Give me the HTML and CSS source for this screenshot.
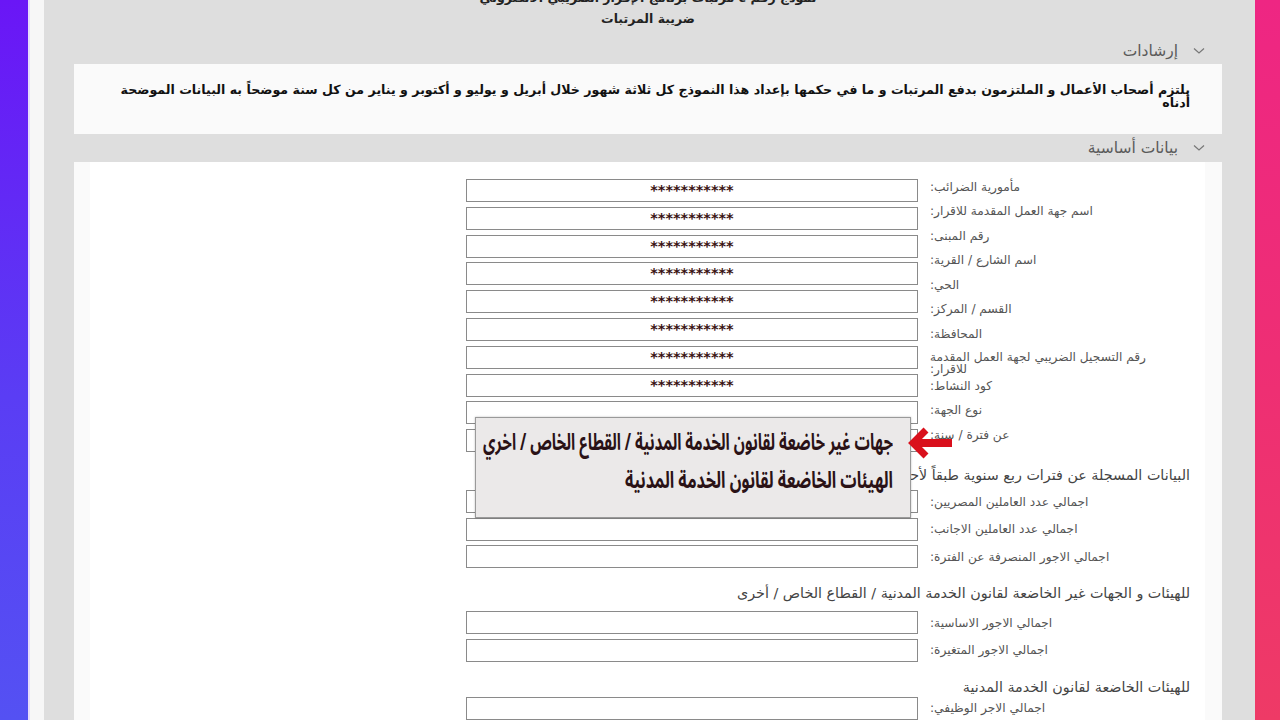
FILE: index.html
```html
<!DOCTYPE html>
<html lang="ar" dir="ltr">
<head>
<meta charset="utf-8">
<title>ضريبة المرتبات</title>
<link rel="stylesheet" href="styles.css">
</head>
<body>
<div class="bar-left"></div>
<div class="gutter"></div>
<main class="main" dir="rtl">
  <div class="title-block">
    <div class="title-line">نموذج رقم ٤ مرتبات برنامج الإقرار الضريبي الالكتروني</div>
    <div class="title-line">ضريبة المرتبات</div>
  </div>

  <div class="acc-head acc-head-first">
    <svg class="chev" viewBox="0 0 12 8" width="12" height="8"><path d="M1 1.5 L6 6 L11 1.5" fill="none" stroke="#777" stroke-width="1.2"/></svg>
    <span>إرشادات</span>
  </div>
  <div class="acc-body notes">
    <p>يلتزم أصحاب الأعمال و الملتزمون بدفع المرتبات و ما في حكمها بإعداد هذا النموذج كل ثلاثة شهور خلال أبريل و يوليو و أكتوبر و يناير من كل سنة موضحاً به البيانات الموضحة أدناه</p>
  </div>

  <div class="acc-head">
    <svg class="chev" viewBox="0 0 12 8" width="12" height="8"><path d="M1 1.5 L6 6 L11 1.5" fill="none" stroke="#777" stroke-width="1.2"/></svg>
    <span>بيانات أساسية</span>
  </div>
  <div class="acc-body form-outer">
    <div class="form-inner">
      <div class="pair">
        <div class="lbl-col">
          <div class="lbl-cell">مأمورية الضرائب:</div>
          <div class="lbl-cell">اسم جهة العمل المقدمة للاقرار:</div>
          <div class="lbl-cell">رقم المبنى:</div>
          <div class="lbl-cell">اسم الشارع / القرية:</div>
          <div class="lbl-cell">الحي:</div>
          <div class="lbl-cell">القسم / المركز:</div>
          <div class="lbl-cell">المحافظة:</div>
          <div class="lbl-cell two">رقم التسجيل الضريبي لجهة العمل المقدمة للاقرار:</div>
          <div class="lbl-cell">كود النشاط:</div>
          <div class="lbl-cell">نوع الجهة:</div>
          <div class="lbl-cell">عن فترة / سنة:</div>
        </div>
        <div class="inp-col">
          <div class="inp">***********</div>
          <div class="inp">***********</div>
          <div class="inp">***********</div>
          <div class="inp">***********</div>
          <div class="inp">***********</div>
          <div class="inp">***********</div>
          <div class="inp">***********</div>
          <div class="inp">***********</div>
          <div class="inp"></div>
          <div class="inp"></div>
        </div>
      </div>

      <div class="sec-title sec-a">البيانات المسجلة عن فترات ربع سنوية طبقاً لأحكام قانون الضريبة على الدخل</div>
      <div class="rows">
        <div class="row"><label class="lbl">اجمالي عدد العاملين المصريين:</label><div class="inp"></div></div>
        <div class="row"><label class="lbl">اجمالي عدد العاملين الاجانب:</label><div class="inp"></div></div>
        <div class="row"><label class="lbl">اجمالي الاجور المنصرفة عن الفترة:</label><div class="inp"></div></div>
      </div>

      <div class="sec-title sec-b">للهيئات و الجهات غير الخاضعة لقانون الخدمة المدنية / القطاع الخاص / أخرى</div>
      <div class="rows">
        <div class="row"><label class="lbl">اجمالي الاجور الاساسية:</label><div class="inp"></div></div>
        <div class="row"><label class="lbl">اجمالي الاجور المتغيرة:</label><div class="inp"></div></div>
      </div>

      <div class="sec-title sec-c">للهيئات الخاضعة لقانون الخدمة المدنية</div>
      <div class="rows">
        <div class="row"><label class="lbl">اجمالي الاجر الوظيفي:</label><div class="inp"></div></div>
      </div>
    </div>
  </div>
</main>
<div class="bar-right"></div>

<div class="callout" dir="rtl">
  <div class="callout-line">جهات غير خاضعة لقانون الخدمة المدنية / القطاع الخاص / اخري</div>
  <div class="callout-line">الهيئات الخاضعة لقانون الخدمة المدنية</div>
</div>
<svg class="arrow" viewBox="0 0 46 32" width="46" height="32">
  <path d="M4 16 L44 16" stroke="#d9101c" stroke-width="8" fill="none"/>
  <path d="M18 3 L5 16 L18 29" stroke="#d9101c" stroke-width="7" fill="none" stroke-linecap="butt" stroke-linejoin="miter"/>
</svg>
</body>
</html>
```

FILE: styles.css
```css
html, body {
  margin: 0;
  padding: 0;
}
body {
  display: flex;
  width: 1280px;
  height: 720px;
  overflow: hidden;
  font-family: "DejaVu Sans", sans-serif;
  background: #dedede;
}
.bar-left {
  width: 28px;
  flex: none;
  background: linear-gradient(180deg, #6a16f6 0%, #5a3df4 55%, #5451f3 100%);
}
.gutter {
  width: 14px;
  flex: none;
  background: #f7f7f7;
  border-left: 2px solid #e6dcfb;
}
.bar-right {
  width: 25px;
  flex: none;
  background: linear-gradient(180deg, #ee2683 0%, #ee2e74 50%, #ee3a66 100%);
}
.main {
  flex: 1;
  min-width: 0;
  background: #dedede;
  padding: 0 33px 0 30px;
}
.title-block {
  margin-top: -12px;
  text-align: center;
  color: #222;
}
.title-line {
  font-size: 12.5px;
  font-weight: bold;
  line-height: 20px;
  white-space: nowrap;
}
.title-line + .title-line {
  margin-top: 1px;
}
.acc-head {
  display: flex;
  align-items: center;
  height: 28px;
  padding-right: 17px;
  gap: 15px;
  color: #5a5a5a;
  font-size: 15.5px;
}
.acc-head-first {
  margin-top: 9px;
  height: 26px;
}
.chev {
  flex: none;
}
.acc-body {
  background: #fafafa;
}
.notes {
  height: 70px;
  padding: 0 32px;
  box-sizing: border-box;
  overflow: hidden;
}
.notes p {
  margin: 0;
  padding-top: 19px;
  font-size: 12.6px;
  font-weight: bold;
  line-height: 13px;
  color: #111;
}
.form-outer {
  padding: 0 17px 0 16px;
  height: 560px;
}
.form-inner {
  background: #fff;
  height: 100%;
  padding: 12.75px 15px 0 0;
  box-sizing: border-box;
}
.pair {
  display: flex;
  align-items: flex-start;
  gap: 12px;
  margin-right: 25px;
}
.lbl-col {
  width: 235px;
  flex: none;
}
.lbl-cell {
  height: 24.5px;
  line-height: 24.5px;
  text-align: left;
  font-size: 12.2px;
  color: #555;
  white-space: nowrap;
}
.lbl-cell.two {
  height: 27.5px;
  line-height: 12px;
  padding-top: 5px;
  box-sizing: border-box;
  white-space: normal;
}
.inp-col {
  display: flex;
  flex-direction: column;
  gap: 4.8px;
  padding-top: 4.25px;
}
.rows {
  display: flex;
  flex-direction: column;
  gap: 4.6px;
}
.row {
  display: flex;
  align-items: center;
  gap: 12px;
  margin-right: 25px;
  height: 23px;
}
.lbl {
  width: 235px;
  flex: none;
  text-align: left;
  font-size: 12.2px;
  line-height: 12px;
  color: #555;
  white-space: nowrap;
}
.inp {
  width: 452px;
  height: 23px;
  flex: none;
  box-sizing: border-box;
  border: 1px solid #8a8a8a;
  background: #fff;
  text-align: center;
  font-size: 14.5px;
  font-weight: bold;
  line-height: 21px;
  color: #3a1212;
  direction: ltr;
}
.sec-title {
  font-size: 14.3px;
  line-height: 16px;
  color: #444;
  white-space: nowrap;
}
.sec-a {
  margin: 15px 0 7px;
}
.sec-b {
  margin: 17px 0 10px;
}
.sec-c {
  margin: 17px 0 2px;
}
.callout {
  position: absolute;
  left: 475px;
  top: 417px;
  width: 436px;
  height: 101px;
  box-sizing: border-box;
  background: #ebe9e9;
  border: 1px solid #9a9a9a;
  box-shadow: 0 0 2px rgba(0,0,0,0.25);
  padding: 6px 17px 0 8px;
  color: #2a1216;
  font-family: "Noto Sans Arabic", "Noto Naskh Arabic", "DejaVu Sans", sans-serif;
  font-weight: bold;
  font-size: 23px;
  line-height: 38px;
  text-align: right;
  white-space: nowrap;
}
.callout-line {
  transform: scaleX(0.66);
  transform-origin: right center;
}
.callout-line + .callout-line {
  transform: scaleX(0.7);
}
.arrow {
  position: absolute;
  left: 908px;
  top: 427px;
}
```
